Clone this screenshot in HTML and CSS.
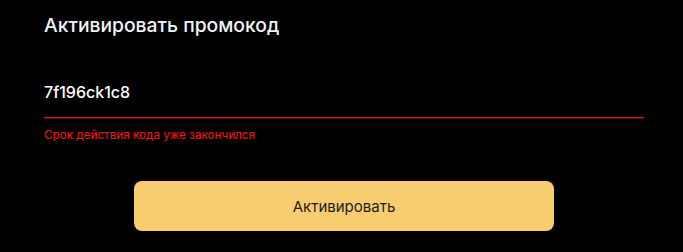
FILE: index.html
```html
<!DOCTYPE html>
<html lang="ru">
<head>
<meta charset="utf-8">
<link rel="stylesheet" href="styles.css">
</head>
<body>
<div class="promo">
  <h2 class="promo-title">Активировать промокод</h2>
  <div class="field">
    <div class="field-value">7f196ck1c8</div>
  </div>
  <div class="field-error">Срок действия кода уже закончился</div>
  <div class="actions">
    <button class="btn">Активировать</button>
  </div>
</div>
</body>
</html>
```
FILE: styles.css
```css
html, body {
  margin: 0;
  padding: 0;
  background: #000;
}
body {
  font-family: "Inter", "Noto Sans", sans-serif;
  color: #fff;
  width: 683px;
  height: 252px;
  overflow: hidden;
}
.promo {
  padding: 11px 39px 0 44px;
}
.promo-title {
  margin: 0;
  font-size: 19.3px;
  font-weight: 500;
  line-height: 28px;
  color: #f4f4f4;
}
.field {
  margin-top: 41px;
  border-bottom: 1px solid #e0121c;
  box-shadow: 0 1px 0 rgba(170, 16, 24, 0.6);
  height: 38px;
  box-sizing: border-box;
}
.field-value {
  font-size: 16px;
  font-weight: 500;
  line-height: 24px;
}
.field-error {
  margin-top: 9px;
  font-size: 11.7px;
  line-height: 16px;
  color: #ff1414;
}
.actions {
  display: flex;
  justify-content: center;
  margin-top: 38px;
}
.btn {
  width: 420px;
  height: 50px;
  border: none;
  border-radius: 8px;
  background: #f8cd6f;
  color: #1d1d1d;
  font-family: "Inter", "Noto Sans", sans-serif;
  font-size: 15px;
  font-weight: 400;
  cursor: pointer;
}
```
